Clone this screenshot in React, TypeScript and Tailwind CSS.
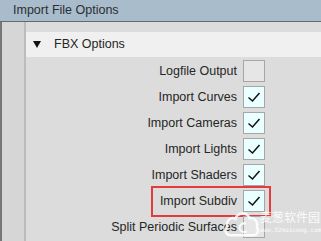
const rows = [
{label:"Logfile Output",checked:false},
{label:"Import Curves",checked:true},
{label:"Import Cameras",checked:true},
{label:"Import Lights",checked:true},
{label:"Import Shaders",checked:true},
{label:"Import Subdiv",checked:true,marked:true},
{label:"Split Periodic Surfaces",checked:false},
];

function Box({checked}:{checked:boolean}){
return(
<div className={"w-[22px] h-[22px] border border-[#a6a6a6] flex items-center justify-center "+(checked?"bg-[#eaffff]":"bg-[#e6e6e6]")}>
{checked && (
<svg width="16" height="16" viewBox="0 0 16 16">
<path d="M2.5 8.5 L6.5 12 L13.5 4" fill="none" stroke="#111" strokeWidth="1.5"/>
</svg>
)}
</div>
);
}

export default function App(){

return(

<div className="w-[321px] h-[241px] overflow-hidden relative bg-[#dcdcdc] text-[#262626]" style={{fontFamily:'"Liberation Sans", Arial, sans-serif'}}>

{/* TITLE */}

<div className="h-[22px] bg-[#a9bccb] border-b border-[#5f6a74] flex items-center px-[13px] text-[12.5px] text-[#2a2e33]">
Import File Options
</div>

<div className="flex h-[219px]">

{/* LEFT STRIP */}

<div className="w-[26px] border-l-2 border-l-[#767676] bg-[#d6d6d6] border-r-2 border-r-[#bcbcbc]"/>

{/* CONTENT */}

<div className="flex-1 pt-[10px]">

<div className="h-[25px] bg-[#f0f0f0] flex items-center pl-[7px] text-[12.5px]">
<svg width="8" height="7" viewBox="0 0 8 7" className="mr-[13px]">
<path d="M0 0 L8 0 L4 7 Z" fill="#111"/>
</svg>
FBX Options
</div>

<div className="pt-[1px]">

{rows.map((r,i)=>(

<div key={i} className="relative h-[26px] flex items-center">

<div className="w-[217px] text-right pr-[6px] text-[12.5px] whitespace-nowrap">
{r.label}
</div>

<Box checked={r.checked}/>

{r.marked && (
<div className="absolute left-[125px] -top-[2px] w-[120px] h-[31px] border-2 border-[#e53b3b]"/>
)}

</div>

))}

</div>

</div>

</div>

{/* WATERMARK */}

<div className="absolute left-[224px] top-[204px] flex items-start gap-[0px] pointer-events-none text-white/85">
<svg width="36" height="38" viewBox="0 0 44 38">
<path d="M8 34 C2 34 0 27 4 23 C2 16 9 11 14 14 C16 6 28 5 31 13 C38 12 42 18 40 24 C43 28 41 34 36 34 Z" fill="none" stroke="rgba(255,255,255,0.85)" strokeWidth="3"/>
<path d="M27 20 C22 18 18 22 19 26 C20 30 25 31 28 29" fill="none" stroke="rgba(255,255,255,0.85)" strokeWidth="2.5"/>
</svg>
<div className="flex flex-col gap-[4px] pt-[7px] leading-none whitespace-nowrap">
<span className="text-[12px]" style={{fontFamily:'"Noto Sans CJK SC", sans-serif'}}>麦葱软件园</span>
<span className="text-[6px]" style={{fontFamily:'"DejaVu Sans Mono", monospace'}}>www.52maicong.com</span>
</div>
</div>

</div>

);

}
